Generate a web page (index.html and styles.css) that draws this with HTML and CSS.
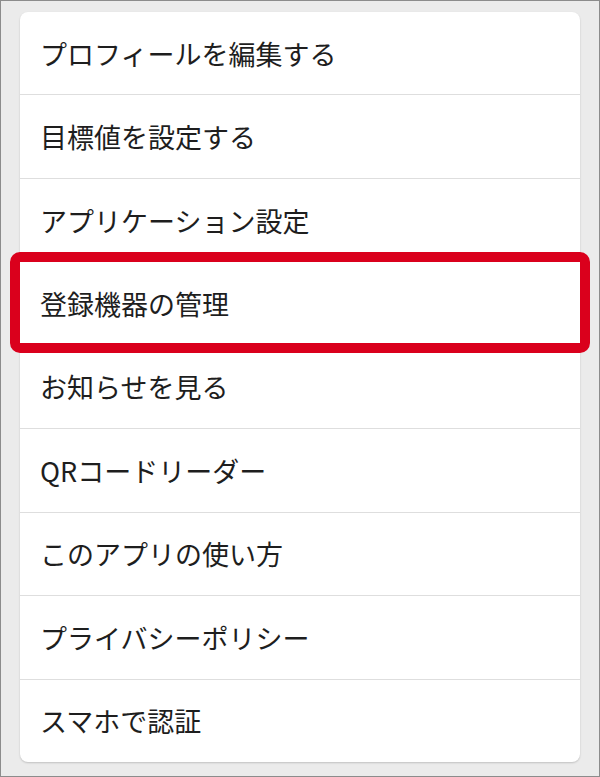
FILE: index.html
```html
<!DOCTYPE html>
<html lang="ja">
<head>
    <meta charset="UTF-8">
    <meta name="viewport" content="width=device-width, initial-scale=1.0">
    <title>メニュー</title>
    <link rel="stylesheet" href="styles.css">
</head>
<body>
    <div class="screen">
        <ul class="menu">
            <li class="menu-item">プロフィールを編集する</li>
            <li class="menu-item">目標値を設定する</li>
            <li class="menu-item">アプリケーション設定</li>
            <li class="menu-item highlight">登録機器の管理</li>
            <li class="menu-item">お知らせを見る</li>
            <li class="menu-item">QRコードリーダー</li>
            <li class="menu-item">このアプリの使い方</li>
            <li class="menu-item">プライバシーポリシー</li>
            <li class="menu-item">スマホで認証</li>
        </ul>
    </div>
</body>
</html>
```

FILE: styles.css
```css
html, body {
    margin: 0;
    padding: 0;
}
body {
    font-family: "Noto Sans CJK JP", "Noto Sans", sans-serif;
    color: #1e1e1e;
}
.screen {
    box-sizing: border-box;
    width: 600px;
    height: 777px;
    border: 1px solid #8c8c8c;
    background-color: #ebebeb;
    padding: 11px 19px 13px;
}
.menu {
    list-style: none;
    margin: 0;
    padding: 0;
    height: 750px;
    display: flex;
    flex-direction: column;
    background-color: #fff;
    border-radius: 8px;
    box-shadow: 0 1px 2px rgba(0, 0, 0, 0.18);
}
.menu-item {
    position: relative;
    flex: 1;
    display: flex;
    align-items: center;
    padding: 0 20px;
    font-size: 27px;
    line-height: 1;
    border-top: 1px solid #dedede;
}
.menu-item:first-child {
    border-top: none;
}
.highlight::after {
    content: "";
    position: absolute;
    z-index: 1;
    top: -10px;
    bottom: -8px;
    left: -10px;
    right: -10px;
    border: 10px solid #da001c;
    border-radius: 10px;
}
```
